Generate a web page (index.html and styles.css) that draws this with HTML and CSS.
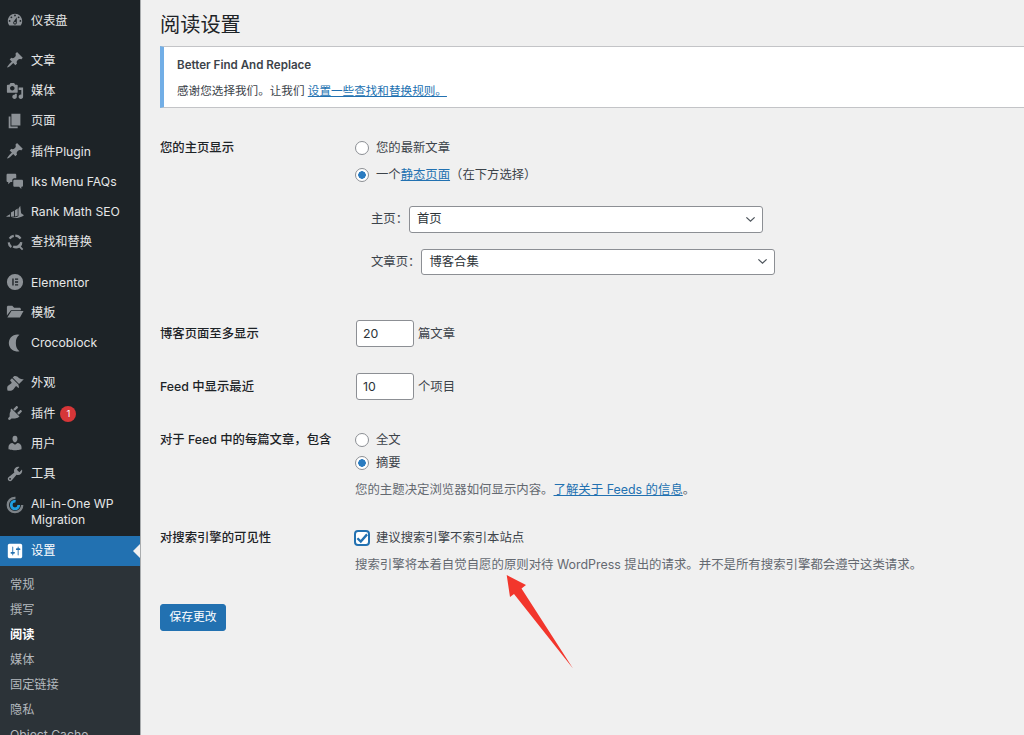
FILE: index.html
```html
<!DOCTYPE html>
<html lang="zh-CN">
<head>
  <meta charset="UTF-8">
  <title>阅读设置</title>
  <link rel="stylesheet" href="styles.css">
</head>
<body>
  <svg class="icon-defs" width="0" height="0">
    <symbol id="i-dashboard" viewBox="0 0 20 20"><path d="M3.76 16h12.48c1.1-1.37 1.76-3.11 1.76-5 0-4.42-3.58-8-8-8s-8 3.58-8 8c0 1.89.66 3.63 1.76 5zM10 4c.55 0 1 .45 1 1s-.45 1-1 1-1-.45-1-1 .45-1 1-1zM6 6c.55 0 1 .45 1 1s-.45 1-1 1-1-.45-1-1 .45-1 1-1zm8 0c.55 0 1 .45 1 1s-.45 1-1 1-1-.45-1-1 .45-1 1-1zm-5.37 5.55L12 7v6c0 1.1-.9 2-2 2s-2-.9-2-2c0-.57.24-1.08.63-1.45zM4 10c.55 0 1 .45 1 1s-.45 1-1 1-1-.45-1-1 .45-1 1-1zm12 0c.55 0 1 .45 1 1s-.45 1-1 1-1-.45-1-1 .45-1 1-1zm-5 3c0-.55-.45-1-1-1s-1 .45-1 1 .45 1 1 1 1-.45 1-1z"/></symbol>
    <symbol id="i-pin" viewBox="0 0 20 20"><path d="M10.44 3.02l1.82-1.82 6.36 6.35-1.83 1.82c-1.05-.68-2.48-.57-3.41.36l-.75.75c-.92.93-1.04 2.35-.35 3.41l-1.83 1.82-2.41-2.41-2.8 2.79c-.42.42-3.38 2.71-3.8 2.29s1.86-3.39 2.28-3.81l2.79-2.79L4.1 9.36l1.83-1.82c1.05.69 2.48.57 3.4-.36l.75-.75c.93-.92 1.05-2.35.36-3.41z"/></symbol>
    <symbol id="i-media" viewBox="0 0 20 20"><path d="M13 11V4c0-.55-.45-1-1-1h-1.67L9 1H5L3.67 3H2c-.55 0-1 .45-1 1v7c0 .55.45 1 1 1h10c.55 0 1-.45 1-1zM7 4.500c1.38 0 2.500 1.120 2.500 2.500S8.380 9.500 7 9.500 4.500 8.380 4.500 7 5.620 4.500 7 4.500zM14 6h5v10.500c0 1.380-1.120 2.500-2.500 2.500S14 17.880 14 16.500s1.120-2.500 2.500-2.500c.17 0 .34.02.5.05V9h-3V6zm-4 8.050V13h2v3.500c0 1.380-1.120 2.500-2.500 2.500S7 17.880 7 16.500 8.120 14 9.500 14c.17 0 .34.02.5.05z"/></symbol>
    <symbol id="i-page" viewBox="0 0 20 20"><path d="M6 15V2h10v13H6zm-1 1h8v2H3V5h2v11z"/></symbol>
    <symbol id="i-chat" viewBox="0 0 20 20"><path d="M2 2h8c.8 0 1.400.6 1.400 1.400V7H9.500C8 7 7 8 7 9.500V11H5l-2.500 2.500V11H2c-.8 0-1.400-.6-1.400-1.400V3.400C.6 2.600 1.200 2 2 2zm7.500 6.500h8c.8 0 1.400.6 1.400 1.400v5.200c0 .8-.6 1.400-1.400 1.400H17v2.500L14.500 16.500h-5c-.8 0-1.400-.6-1.400-1.400V9.900c0-.8.6-1.400 1.400-1.400z"/></symbol>
    <symbol id="i-rank" viewBox="0 0 20 20"><path d="M0 15l4.500-2.600v2.800c-1.500.1-3 .1-4.500-.2zM5.500 10.500L9 8.500v6.500l-3.500.2zM10 8l3-2v8.300l-3 .6zM13.800 6.500L15.800 3l1 8.500 3.200 2c-3 2.500-9 4-14 2.800 3.500 0 6.500-.6 7.800-1.800z"/></symbol>
    <symbol id="i-replace" viewBox="0 0 20 20"><path d="M10.300 1.800a8.200 8.200 0 0 1 6.900 3.800l-2.100 1.300a5.800 5.800 0 0 0-4.800-2.700zM3 5.600A8.200 8.200 0 0 1 8.400 2l.5 2.400a5.800 5.800 0 0 0-3.800 2.500zM1.800 10.500l2.400-.2a5.800 5.800 0 0 0 2.400 4.300l-1.300 2.100a8.200 8.200 0 0 1-3.500-6.200zM15.800 10l2.400.2a8.200 8.200 0 0 1-1.700 4.900l2.700 2.600-1.400 1.400-2.900-2.700a8.200 8.200 0 0 1-7.600-.3l1.200-2.100a5.800 5.800 0 0 0 7.300-4z"/></symbol>
    <symbol id="i-elementor" viewBox="0 0 20 20"><path fill-rule="evenodd" d="M10 1a9 9 0 1 0 0 18 9 9 0 0 0 0-18zM7 6h1.500v8H7zM10 6h3.500v1.500H10zM10 9.250h3.500v1.500H10zM10 12.500h3.500V14H10z"/></symbol>
    <symbol id="i-folder" viewBox="0 0 20 20"><path d="M1 4.500C1 3.700 1.700 3 2.500 3H7l2 2.200h6c.8 0 1.500.7 1.500 1.500V8H5.500L1 14zM6 9h13.500L15.500 16H1.500z"/></symbol>
    <symbol id="i-croco" viewBox="0 0 20 20"><path d="M15 .8A9.500 9.500 0 1 0 15 19.200 11 11 0 0 1 11 10 11 11 0 0 1 15 .8z"/></symbol>
    <symbol id="i-brush" viewBox="0 0 20 20"><path d="M14.480 11.060L7.410 3.990l1.500-1.500c.5-.56 2.300-.47 3.510.32 1.210.8 1.430 1.280 2.910 2.100 1.180.64 2.450 1.260 4.450.85zm-.71.71L6.700 4.700 4.930 6.470c-.39.39-.39 1.020 0 1.410l1.060 1.060c.39.39.39 1.030 0 1.420-.6.6-1.430 1.110-2.210 1.690-.35.26-.7.53-1.010.84C1.430 13.230.99 15.320 1.600 18.400c3.080.61 5.170.17 6.490-1.160.31-.31.58-.66.84-1.010.58-.78 1.090-1.610 1.690-2.210.39-.39 1.030-.39 1.420 0l1.060 1.060c.39.39 1.020.39 1.410 0z"/></symbol>
    <symbol id="i-plugin" viewBox="0 0 20 20"><path d="M13.110 4.360L9.870 7.600 8 5.730l3.240-3.240c.35-.34 1.050-.2 1.560.32.52.51.66 1.210.31 1.550zm-8 1.770l.91-1.120 9.010 9.010-1.190.84c-.71.71-2.630 1.160-3.820 1.160H6.140L4.900 17.260c-.59.59-1.540.59-2.120 0-.59-.58-.59-1.530 0-2.120l1.240-1.240v-1.880c0-1.190.45-3.110 1.090-3.890zm7.260 3.970l3.240-3.240c.34-.35 1.040-.21 1.550.31.52.51.66 1.210.31 1.550l-3.240 3.250z"/></symbol>
    <symbol id="i-user" viewBox="0 0 20 20"><path d="M10 9.250c-2.270 0-2.730-3.440-2.730-3.440C7 4.020 7.820 2 9.970 2c2.160 0 2.980 2.020 2.710 3.810 0 0-.41 3.440-2.680 3.440zm0 2.570L12.720 10c2.390 0 4.520 2.330 4.520 4.530v2.490s-3.650 1.130-7.240 1.130c-3.650 0-7.240-1.130-7.240-1.130v-2.490c0-2.250 1.940-4.480 4.470-4.480z"/></symbol>
    <symbol id="i-tool" viewBox="0 0 20 20"><path d="M16.680 9.770c-1.340 1.340-3.300 1.670-4.950.99l-5.410 6.520c-.99.99-2.590.99-3.580 0s-.99-2.590 0-3.570l6.520-5.420c-.68-1.650-.35-3.610.99-4.950 1.280-1.280 3.120-1.620 4.720-1.060l-2.890 2.890 2.820 2.820 2.860-2.870c.53 1.580.18 3.390-1.080 4.650zM3.810 16.210c.4.39 1.040.39 1.430 0 .4-.4.4-1.040 0-1.430-.39-.4-1.030-.4-1.430 0-.39.39-.39 1.030 0 1.430z"/></symbol>
    <symbol id="i-settings" viewBox="0 0 20 20"><path d="M18 16V4c0-1.100-.9-2-2-2H4c-1.100 0-2 .9-2 2v12c0 1.100.9 2 2 2h12c1.100 0 2-.9 2-2zM8 11h1c.55 0 1 .45 1 1s-.45 1-1 1H8v1.500c0 .28-.22.5-.5.5s-.5-.22-.5-.5V13H6c-.55 0-1-.45-1-1s.45-1 1-1h1V5.500c0-.28.22-.5.5-.5s.5.22.5.5V11zm5-2h-1c-.55 0-1-.45-1-1s.45-1 1-1h1V5.500c0-.28.22-.5.5-.5s.5.22.5.5V7h1c.55 0 1 .45 1 1s-.45 1-1 1h-1v5.500c0 .28-.22.5-.5.5s-.5-.22-.5-.5V9z"/></symbol>
  </svg>

  <div class="wrap">
    <aside class="sidebar">
      <ul class="menu">
        <li class="menu-item"><svg class="icon"><use href="#i-dashboard"/></svg>仪表盘</li>
        <li class="menu-sep"></li>
        <li class="menu-item"><svg class="icon"><use href="#i-pin"/></svg>文章</li>
        <li class="menu-item"><svg class="icon"><use href="#i-media"/></svg>媒体</li>
        <li class="menu-item"><svg class="icon"><use href="#i-page"/></svg>页面</li>
        <li class="menu-item"><svg class="icon"><use href="#i-pin"/></svg>插件Plugin</li>
        <li class="menu-item"><svg class="icon"><use href="#i-chat"/></svg>Iks Menu FAQs</li>
        <li class="menu-item"><svg class="icon"><use href="#i-rank"/></svg>Rank Math SEO</li>
        <li class="menu-item"><svg class="icon"><use href="#i-replace"/></svg>查找和替换</li>
        <li class="menu-sep"></li>
        <li class="menu-item"><svg class="icon"><use href="#i-elementor"/></svg>Elementor</li>
        <li class="menu-item"><svg class="icon"><use href="#i-folder"/></svg>模板</li>
        <li class="menu-item"><svg class="icon"><use href="#i-croco"/></svg>Crocoblock</li>
        <li class="menu-sep"></li>
        <li class="menu-item"><svg class="icon"><use href="#i-brush"/></svg>外观</li>
        <li class="menu-item"><svg class="icon"><use href="#i-plugin"/></svg>插件<span class="badge">1</span></li>
        <li class="menu-item"><svg class="icon"><use href="#i-user"/></svg>用户</li>
        <li class="menu-item"><svg class="icon"><use href="#i-tool"/></svg>工具</li>
        <li class="menu-item menu-item-tall">
          <svg class="icon" viewBox="0 0 20 20">
            <circle cx="10" cy="10" r="8" fill="none" stroke="#7d8388" stroke-width="2.600" stroke-dasharray="38 12"/>
            <circle cx="10" cy="10" r="4.200" fill="none" stroke="#1f9fe0" stroke-width="3" stroke-dasharray="20 6.400"/>
          </svg>
          <span>All-in-One WP<br>Migration</span>
        </li>
        <li class="menu-item menu-item-active"><svg class="icon"><use href="#i-settings"/></svg>设置</li>
      </ul>
      <ul class="submenu">
        <li>常规</li>
        <li>撰写</li>
        <li class="current">阅读</li>
        <li>媒体</li>
        <li>固定链接</li>
        <li>隐私</li>
        <li>Object Cache</li>
      </ul>
    </aside>

    <main class="content">
      <h1>阅读设置</h1>

      <div class="notice">
        <p class="notice-title">Better Find And Replace</p>
        <p class="notice-text">感谢您选择我们。让我们 <a href="#">设置一些查找和替换规则。</a></p>
      </div>

      <form class="settings">
        <div class="row row-front">
          <div class="row-label">您的主页显示</div>
          <div>
            <label class="choice"><input type="radio" name="front"><span>您的最新文章</span></label>
            <label class="choice"><input type="radio" name="front" checked><span>一个<a href="#">静态页面</a>（在下方选择）</span></label>
            <div class="page-select page-select-first">
              <label for="home">主页：</label>
              <select id="home" class="page-dropdown"><option>首页</option></select>
            </div>
            <div class="page-select">
              <label for="posts">文章页：</label>
              <select id="posts" class="page-dropdown"><option>博客合集</option></select>
            </div>
          </div>
        </div>

        <div class="row row-count">
          <div class="row-label">博客页面至多显示</div>
          <div class="count"><input type="text" value="20">篇文章</div>
        </div>

        <div class="row row-feed-count">
          <div class="row-label">Feed 中显示最近</div>
          <div class="count"><input type="text" value="10">个项目</div>
        </div>

        <div class="row row-feed">
          <div class="row-label">对于 Feed 中的每篇文章，包含</div>
          <div>
            <label class="choice choice-tight"><input type="radio" name="feed"><span>全文</span></label>
            <label class="choice choice-tight"><input type="radio" name="feed" checked><span>摘要</span></label>
            <p class="desc">您的主题决定浏览器如何显示内容。<a href="#">了解关于 Feeds 的信息</a>。</p>
          </div>
        </div>

        <div class="row row-search">
          <div class="row-label">对搜索引擎的可见性</div>
          <div>
            <label class="choice"><input type="checkbox" checked><span>建议搜索引擎不索引本站点</span></label>
            <p class="desc">搜索引擎将本着自觉自愿的原则对待 WordPress 提出的请求。并不是所有搜索引擎都会遵守这类请求。</p>
          </div>
        </div>

        <button type="submit" class="save">保存更改</button>
      </form>
    </main>
  </div>

  <!-- annotation drawn over the screenshot -->
  <svg class="arrow" width="1024" height="735" viewBox="0 0 1024 735">
    <polygon points="506.700,575 526,585 521.500,588.500 573,668.500 514,594 510,597" fill="#f2362c"/>
  </svg>
</body>
</html>
```

FILE: styles.css
```css
* {
  box-sizing: border-box;
}

html,
body {
  margin: 0;
  height: 735px;
  overflow: hidden;
}

body {
  background: #f0f0f0;
  color: #3c434a;
  font-family: "Inter", "Noto Sans CJK SC", sans-serif;
  font-size: 12.35px;
  line-height: 20px;
}

a {
  color: #2271b1;
}

.icon-defs {
  display: block;
  height: 0;
}

.wrap {
  display: flex;
  height: 735px;
}

/* sidebar */
.sidebar {
  flex: 0 0 141px;
  height: 735px;
  overflow: hidden;
  background: #1d2327;
  color: #e6e7e8;
  border-right: 1px solid #a9acae;
  font-size: 12.2px;
}

.menu,
.submenu {
  list-style: none;
  margin: 0;
  padding: 0;
}

.menu {
  padding-top: 5px;
}

.menu-item {
  display: flex;
  align-items: center;
  gap: 7px;
  height: 30.25px;
  padding: 1px 0 0 6px;
}

.menu-sep {
  height: 10px;
}

.icon {
  flex: none;
  width: 18px;
  height: 18px;
  margin-top: -1px;
  fill: #8c9196;
}

.menu-item-tall {
  height: 46.750px;
  line-height: 16px;
  align-items: flex-start;
  padding-top: 7px;
}

.menu-item-tall .icon {
  margin-top: 0;
}

.menu-item-active {
  position: relative;
  background: #2271b1;
  color: #fff;
}

.menu-item-active .icon {
  fill: #fff;
}

.menu-item-active::after {
  content: "";
  position: absolute;
  right: 0;
  top: 50%;
  margin-top: -7px;
  border: 7px solid transparent;
  border-right-color: #f0f0f0;
  border-left: 0;
}

.badge {
  width: 16px;
  height: 16px;
  margin-left: -2px;
  border-radius: 50%;
  background: #d63638;
  color: #fff;
  font-size: 9.500px;
  line-height: 16px;
  text-align: center;
}

.submenu {
  padding: 6.500px 0 0 10px;
  background: #2c3338;
  color: #b4b9be;
  height: 200px;
}

.submenu li {
  height: 25px;
  line-height: 25px;
}

.submenu .current {
  color: #fff;
  font-weight: 600;
}

/* main */
.content {
  flex: 1;
  min-width: 0;
  padding-left: 19px;
}

h1 {
  margin: 0;
  padding-top: 10px;
  font-size: 20.200px;
  font-weight: 400;
  line-height: 30px;
  color: #1d2327;
}

.notice {
  height: 62px;
  margin-top: 6px;
  padding: 8px 0 0 13px;
  background: #fff;
  border: 1px solid #c3c4c7;
  border-left: 4px solid #72aee6;
  border-right: 0;
  font-size: 11.600px;
}

.notice p {
  margin: 0;
}

.notice-title {
  color: #3c434a;
  font-weight: 600;
}

.notice .notice-text {
  margin-top: 6px;
}

/* form */
.row {
  display: grid;
  grid-template-columns: 195px 1fr;
}

.row-label {
  color: #1d2327;
  font-weight: 500;
}

.row-front {
  margin-top: 30px;
  height: 172px;
}

.row-count {
  margin-top: 10px;
  height: 27px;
}

.row-feed-count {
  margin-top: 26px;
  height: 27px;
}

.row-feed {
  margin-top: 30px;
  height: 87px;
}

.row-search {
  margin-top: 11px;
}

.row-count .row-label,
.row-feed-count .row-label {
  line-height: 27px;
}

.choice {
  display: flex;
  align-items: center;
  gap: 7px;
  height: 27px;
  margin-top: -3.500px;
}

.choice + .choice {
  margin-top: 0;
}

.choice-tight + .choice-tight {
  margin-top: -4px;
}

.choice input {
  appearance: none;
  flex: none;
  width: 14px;
  height: 14px;
  margin: 0;
  background: #fff;
  border: 1px solid #8c8f94;
}

.choice input[type="radio"] {
  border-radius: 50%;
}

.choice input[type="radio"]:checked {
  background: radial-gradient(circle, #2a7bc0 0, #2a7bc0 3.500px, #fff 4px);
}

.choice input[type="checkbox"] {
  width: 16px;
  height: 16px;
  margin-left: -1px;
  margin-right: -1px;
  border: 2px solid #2271b1;
  border-radius: 4px;
  background: #fff url("data:image/svg+xml,%3Csvg xmlns='http://www.w3.org/2000/svg' viewBox='0 0 14 14'%3E%3Cpath d='M2 7l3.500 3.500L12 3' fill='none' stroke='%232271b1' stroke-width='2.400'/%3E%3C/svg%3E") center / 13px no-repeat;
}

.page-select {
  display: flex;
  align-items: center;
  gap: 1px;
  height: 26.500px;
  margin: 16px 0 0 16px;
}

.page-select-first {
  margin-top: 17.500px;
}

.page-select label {
  white-space: nowrap;
}

.page-dropdown {
  appearance: none;
  width: 354px;
  height: 26.500px;
  padding: 0 24px 0 7px;
  background: #fff url("data:image/svg+xml,%3Csvg xmlns='http://www.w3.org/2000/svg' viewBox='0 0 12 8'%3E%3Cpath d='M1.500 1.500L6 6l4.500-4.500' fill='none' stroke='%2350575e' stroke-width='1.400'/%3E%3C/svg%3E") right 6px center / 11px no-repeat;
  border: 1px solid #8c8f94;
  border-radius: 3px;
  color: #2c3338;
  font: inherit;
}

.count {
  display: flex;
  align-items: center;
  gap: 4.500px;
}

.count input {
  width: 57.500px;
  height: 26.500px;
  margin-left: 1px;
  padding: 0 6px;
  background: #fff;
  border: 1px solid #8c8f94;
  border-radius: 3px;
  color: #2c3338;
  font: inherit;
}

.desc {
  margin: 3px 0 0;
  color: #646970;
  font-size: 12.420px;
}

.save {
  display: block;
  width: 66px;
  height: 27px;
  margin-top: 29px;
  padding: 0;
  background: #2271b1;
  border: 1px solid #2271b1;
  border-radius: 3px;
  color: #fff;
  font: inherit;
  font-size: 11.800px;
}

.arrow {
  position: absolute;
  left: 0;
  top: 0;
  pointer-events: none;
}
```
